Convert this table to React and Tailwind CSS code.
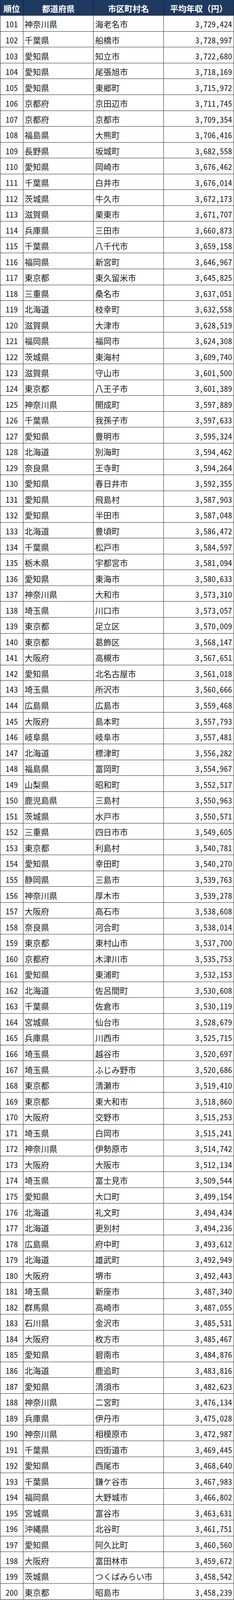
import React from 'react';

const rows = [
  [101, '神奈川県', '海老名市', '3,729,424'],
  [102, '千葉県', '船橋市', '3,728,997'],
  [103, '愛知県', '知立市', '3,722,680'],
  [104, '愛知県', '尾張旭市', '3,718,169'],
  [105, '愛知県', '東郷町', '3,715,972'],
  [106, '京都府', '京田辺市', '3,711,745'],
  [107, '京都府', '京都市', '3,709,354'],
  [108, '福島県', '大熊町', '3,706,416'],
  [109, '長野県', '坂城町', '3,682,558'],
  [110, '愛知県', '岡崎市', '3,676,462'],
  [111, '千葉県', '白井市', '3,676,014'],
  [112, '茨城県', '牛久市', '3,672,173'],
  [113, '滋賀県', '栗東市', '3,671,707'],
  [114, '兵庫県', '三田市', '3,660,873'],
  [115, '千葉県', '八千代市', '3,659,158'],
  [116, '福岡県', '新宮町', '3,646,967'],
  [117, '東京都', '東久留米市', '3,645,825'],
  [118, '三重県', '桑名市', '3,637,051'],
  [119, '北海道', '枝幸町', '3,632,558'],
  [120, '滋賀県', '大津市', '3,628,519'],
  [121, '福岡県', '福岡市', '3,624,308'],
  [122, '茨城県', '東海村', '3,609,740'],
  [123, '滋賀県', '守山市', '3,601,500'],
  [124, '東京都', '八王子市', '3,601,389'],
  [125, '神奈川県', '開成町', '3,597,889'],
  [126, '千葉県', '我孫子市', '3,597,633'],
  [127, '愛知県', '豊明市', '3,595,324'],
  [128, '北海道', '別海町', '3,594,462'],
  [129, '奈良県', '王寺町', '3,594,264'],
  [130, '愛知県', '春日井市', '3,592,355'],
  [131, '愛知県', '飛島村', '3,587,903'],
  [132, '愛知県', '半田市', '3,587,048'],
  [133, '北海道', '豊頃町', '3,586,472'],
  [134, '千葉県', '松戸市', '3,584,597'],
  [135, '栃木県', '宇都宮市', '3,581,094'],
  [136, '愛知県', '東海市', '3,580,633'],
  [137, '神奈川県', '大和市', '3,573,310'],
  [138, '埼玉県', '川口市', '3,573,057'],
  [139, '東京都', '足立区', '3,570,009'],
  [140, '東京都', '葛飾区', '3,568,147'],
  [141, '大阪府', '高槻市', '3,567,651'],
  [142, '愛知県', '北名古屋市', '3,561,018'],
  [143, '埼玉県', '所沢市', '3,560,666'],
  [144, '広島県', '広島市', '3,559,468'],
  [145, '大阪府', '島本町', '3,557,793'],
  [146, '岐阜県', '岐阜市', '3,557,481'],
  [147, '北海道', '標津町', '3,556,282'],
  [148, '福島県', '富岡町', '3,554,967'],
  [149, '山梨県', '昭和町', '3,552,517'],
  [150, '鹿児島県', '三島村', '3,550,963'],
  [151, '茨城県', '水戸市', '3,550,571'],
  [152, '三重県', '四日市市', '3,549,605'],
  [153, '東京都', '利島村', '3,540,781'],
  [154, '愛知県', '幸田町', '3,540,270'],
  [155, '静岡県', '三島市', '3,539,763'],
  [156, '神奈川県', '厚木市', '3,539,278'],
  [157, '大阪府', '高石市', '3,538,608'],
  [158, '奈良県', '河合町', '3,538,014'],
  [159, '東京都', '東村山市', '3,537,700'],
  [160, '京都府', '木津川市', '3,535,753'],
  [161, '愛知県', '東浦町', '3,532,153'],
  [162, '北海道', '佐呂間町', '3,530,608'],
  [163, '千葉県', '佐倉市', '3,530,119'],
  [164, '宮城県', '仙台市', '3,528,679'],
  [165, '兵庫県', '川西市', '3,525,715'],
  [166, '埼玉県', '越谷市', '3,520,697'],
  [167, '埼玉県', 'ふじみ野市', '3,520,686'],
  [168, '東京都', '清瀬市', '3,519,410'],
  [169, '東京都', '東大和市', '3,518,860'],
  [170, '大阪府', '交野市', '3,515,253'],
  [171, '埼玉県', '白岡市', '3,515,241'],
  [172, '神奈川県', '伊勢原市', '3,514,742'],
  [173, '大阪府', '大阪市', '3,512,134'],
  [174, '埼玉県', '富士見市', '3,509,544'],
  [175, '愛知県', '大口町', '3,499,154'],
  [176, '北海道', '礼文町', '3,494,434'],
  [177, '北海道', '更別村', '3,494,236'],
  [178, '広島県', '府中町', '3,493,612'],
  [179, '北海道', '雄武町', '3,492,949'],
  [180, '大阪府', '堺市', '3,492,443'],
  [181, '埼玉県', '新座市', '3,487,340'],
  [182, '群馬県', '高崎市', '3,487,055'],
  [183, '石川県', '金沢市', '3,485,531'],
  [184, '大阪府', '枚方市', '3,485,467'],
  [185, '愛知県', '碧南市', '3,484,876'],
  [186, '北海道', '鹿追町', '3,483,816'],
  [187, '愛知県', '清須市', '3,482,623'],
  [188, '神奈川県', '二宮町', '3,476,134'],
  [189, '兵庫県', '伊丹市', '3,475,028'],
  [190, '神奈川県', '相模原市', '3,472,987'],
  [191, '千葉県', '四街道市', '3,469,445'],
  [192, '愛知県', '西尾市', '3,468,640'],
  [193, '千葉県', '鎌ケ谷市', '3,467,983'],
  [194, '福岡県', '大野城市', '3,466,802'],
  [195, '宮城県', '富谷市', '3,463,631'],
  [196, '沖縄県', '北谷町', '3,461,751'],
  [197, '愛知県', '阿久比町', '3,460,560'],
  [198, '大阪府', '富田林市', '3,459,672'],
  [199, '茨城県', 'つくばみらい市', '3,458,542'],
  [200, '東京都', '昭島市', '3,458,239'],
];

// row heights follow the viewport so all 100 rows fill the frame
const cell = 'flex items-center overflow-hidden border-r border-b border-[#2b2b2b] pt-[4px]';
const head = 'flex items-center justify-center overflow-hidden pt-[3px] bg-[#1f3a60] text-white font-bold border-r border-b border-[#1a1a1a]';

export default function App() {
  return (
    <div className="w-[600px] bg-white text-[21px] leading-none font-medium text-[#1c1c1c] font-['Noto_Sans_Mono_CJK_JP','Noto_Sans_CJK_JP',sans-serif]">
      <div className="grid grid-cols-[59px_180px_180px_180px] grid-rows-[0.982vh] auto-rows-[0.9901vh] border-l border-[#1a1a1a]">
        <div className={head}>順位</div>
        <div className={head}>都道府県</div>
        <div className={head}>市区町村名</div>
        <div className={head}>平均年収（円）</div>

        {rows.map(([rank, pref, city, income]) => (
          <React.Fragment key={rank}>
            <div className={`${cell} justify-center`}>{rank}</div>
            <div className={`${cell} pl-[3px]`}>{pref}</div>
            <div className={`${cell} pl-[4px]`}>{city}</div>
            <div className={`${cell} justify-end pr-[4px]`}>{income}</div>
          </React.Fragment>
        ))}
      </div>
    </div>
  );
}
